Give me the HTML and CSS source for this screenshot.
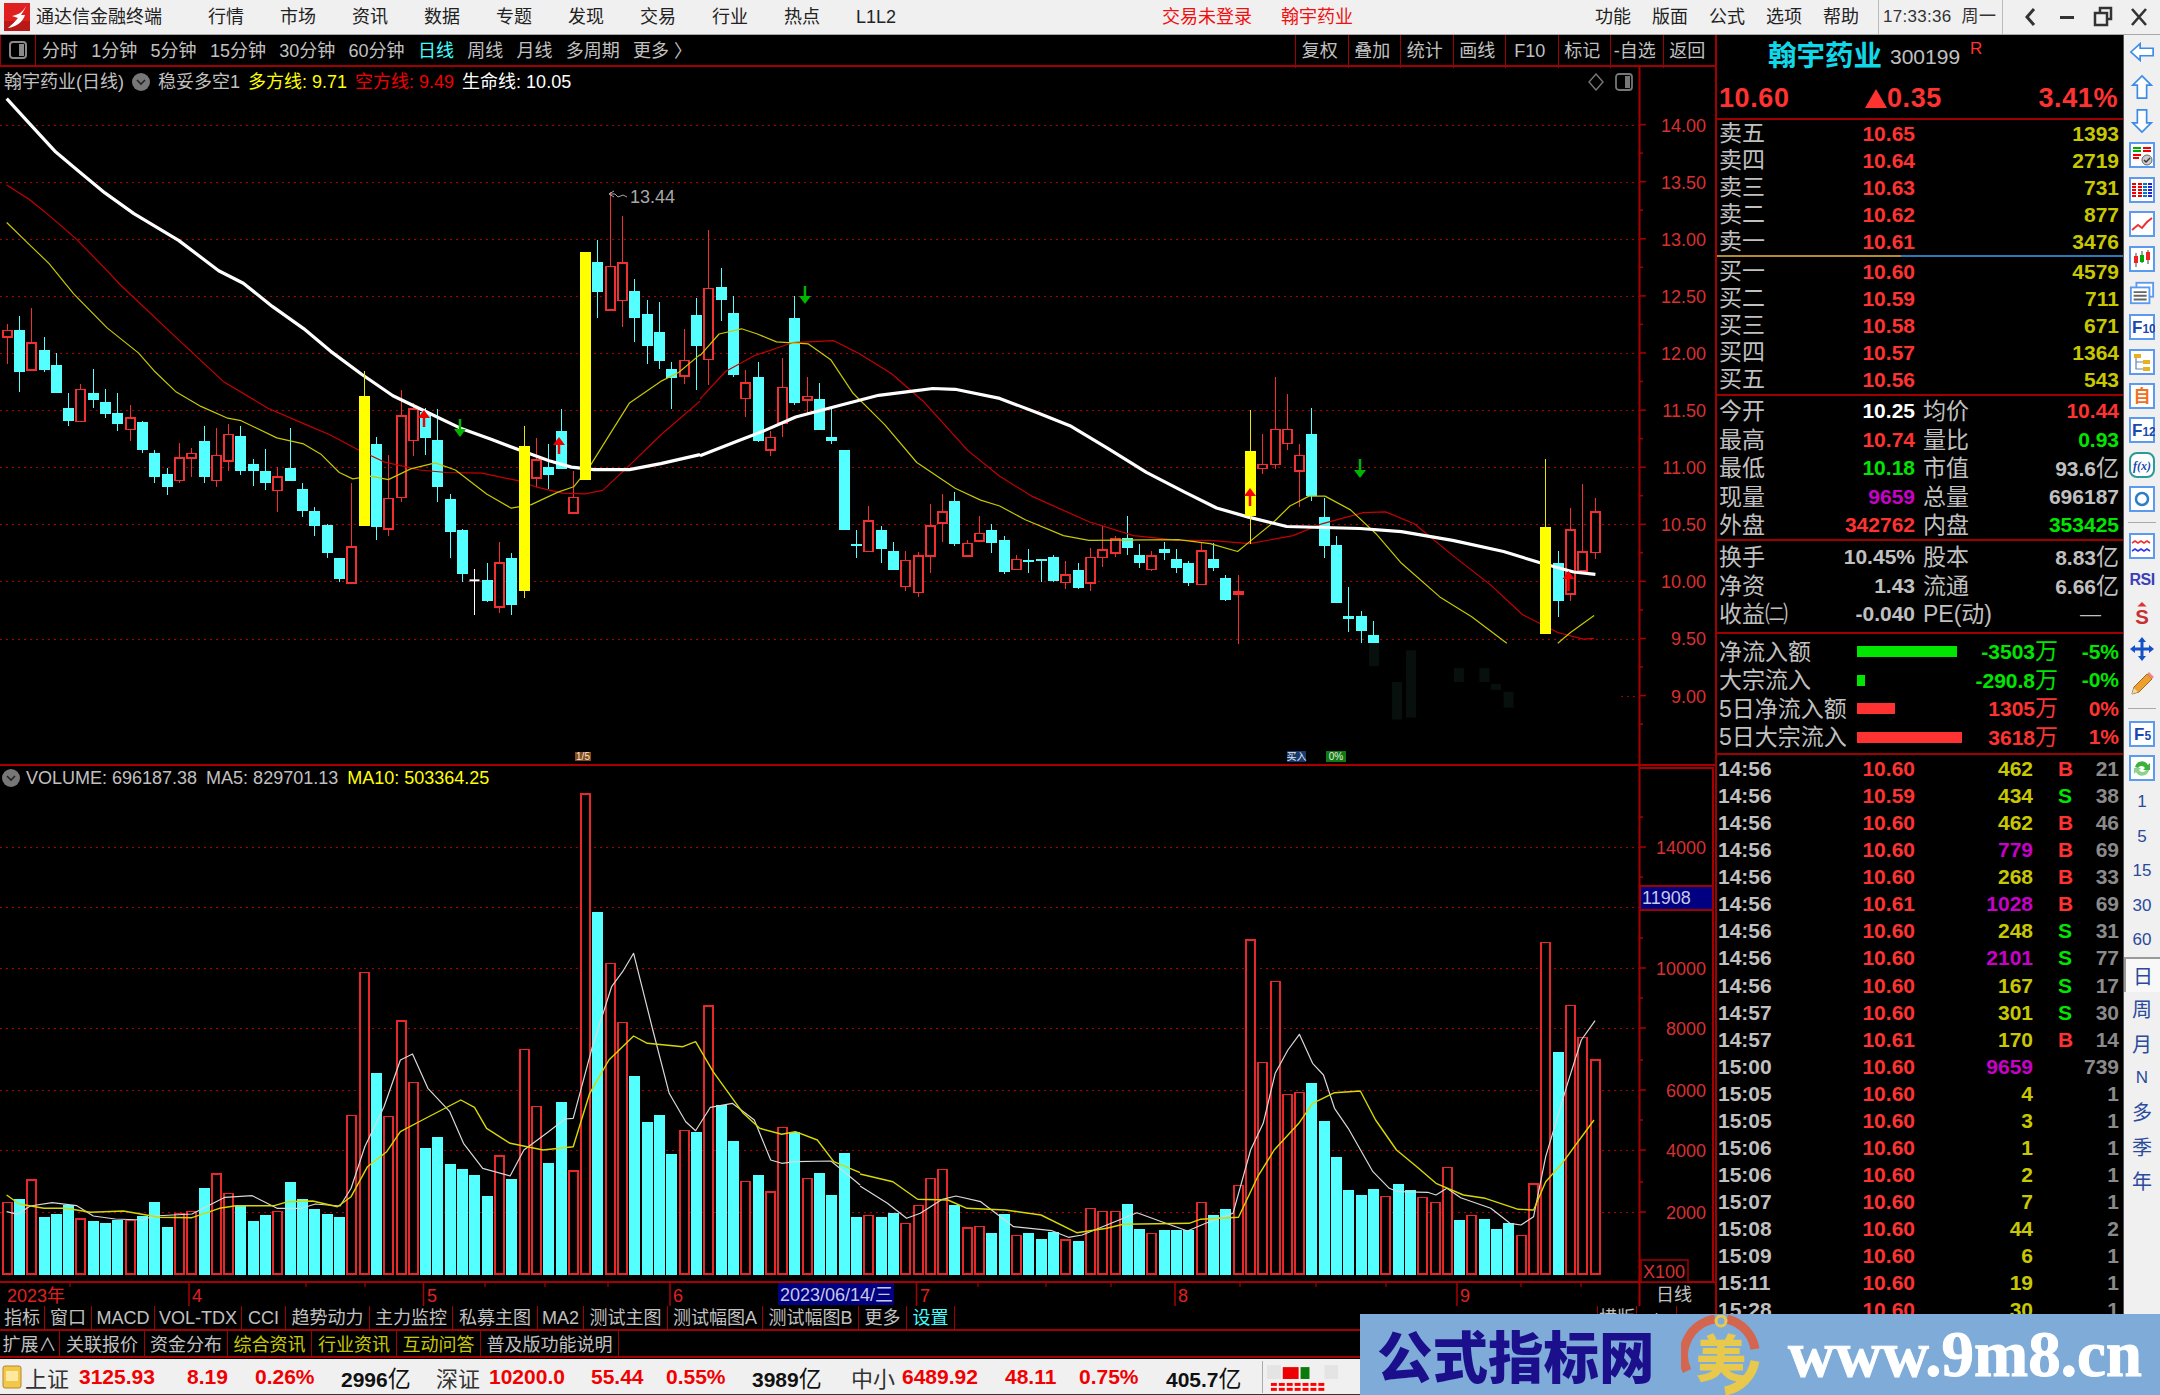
FILE: index.html
```html
<!DOCTYPE html>
<html lang="zh-CN">
<head>
<meta charset="utf-8">
<title>通达信金融终端</title>
<link rel="stylesheet" href="styles.css">
</head>
<body>
<div class="app">
  <header class="titlebar">
    <svg class="logo" viewBox="0 0 26 28"><rect width="26" height="28" fill="#e02020"/><rect x="0" y="18" width="26" height="10" fill="#b81818"/><path d="M22 3C19 9 14 12 8 13l6 2C11 19 7 22 4 25c8-1 15-6 17-13l-4 0c2-3 4-6 5-9Z" fill="#fff"/></svg>
    <span class="app-name">通达信金融终端</span>
    <nav class="menu menu-main"><span>行情</span><span>市场</span><span>资讯</span><span>数据</span><span>专题</span><span>发现</span><span>交易</span><span>行业</span><span>热点</span><span>L1L2</span></nav>
    <span class="alert alert-login">交易未登录</span>
    <span class="alert alert-stock">翰宇药业</span>
    <nav class="menu menu-right"><span>功能</span><span>版面</span><span>公式</span><span>选项</span><span>帮助</span></nav>
    <div class="clock"><span>17:33:36</span><span>周一</span></div>
    <div class="win-btns">
      <svg viewBox="0 0 20 24"><path d="M13 4 6 12l7 8" fill="none" stroke="#333" stroke-width="3"/></svg>
      <svg viewBox="0 0 20 24"><rect x="3" y="11" width="14" height="3" fill="#333"/></svg>
      <svg viewBox="0 0 20 24"><rect x="7" y="3" width="11" height="11" fill="none" stroke="#333" stroke-width="2.5"/><rect x="2" y="8" width="12" height="12" fill="#f0f0f0" stroke="#333" stroke-width="2.5"/></svg>
      <svg viewBox="0 0 20 24"><path d="M3 4l14 16M17 4 3 20" fill="none" stroke="#333" stroke-width="2.6"/></svg>
    </div>
  </header>

  <div class="workspace">
    <main class="left">
      <div class="toolbar">
        <div class="tool-toggle"><svg viewBox="0 0 20 20"><rect x="2" y="2" width="16" height="16" rx="3" fill="none" stroke="#8a8a8a" stroke-width="2"/><rect x="11" y="4" width="5" height="12" fill="#8a8a8a"/></svg></div>
        <div class="periods"><span>分时</span><span>1分钟</span><span>5分钟</span><span>15分钟</span><span>30分钟</span><span>60分钟</span><span class="c">日线</span><span>周线</span><span>月线</span><span>多周期</span><span>更多 〉</span></div>
        <div class="tool-btns"><span>复权</span><span>叠加</span><span>统计</span><span>画线</span><span>F10</span><span>标记</span><span>-自选</span><span>返回</span></div>
      </div>

      <div class="charts">
        <svg id="chart" class="chart" viewBox="0 67 1715 1239" width="1715" height="1239">
          <g id="chart-layer"></g>
          <g class="ax">
            <text x="1706" y="126">14.00</text><text x="1706" y="183">13.50</text><text x="1706" y="240">13.00</text><text x="1706" y="297">12.50</text><text x="1706" y="354">12.00</text><text x="1706" y="411">11.50</text><text x="1706" y="468">11.00</text><text x="1706" y="525">10.50</text><text x="1706" y="582">10.00</text><text x="1706" y="639">9.50</text><text x="1706" y="697">9.00</text>
            <text x="1706" y="848">14000</text><text x="1706" y="969">10000</text><text x="1706" y="1029">8000</text><text x="1706" y="1091">6000</text><text x="1706" y="1151">4000</text><text x="1706" y="1213">2000</text>
          </g>
          <rect class="cursor-box" x="1640" y="886" width="73" height="24"/>
          <text class="cursor-text" x="1642" y="898">11908</text>
          <rect class="x100-box" x="1641" y="1260" width="47" height="22"/>
          <text class="x100" x="1643" y="1272">X100</text>
          <text class="peak" x="630" y="197">13.44</text>
          <rect class="tag tag-o" x="575" y="752" width="16" height="9"/><text class="tag-t" x="583" y="756.5">1/5</text>
          <rect class="tag tag-b" x="1287" y="751" width="19" height="11"/><text class="tag-t" x="1296.5" y="756.5">买入</text>
          <rect class="tag tag-g" x="1326" y="751" width="20" height="11"/><text class="tag-t" x="1336" y="756.5">0%</text>
          <g class="time">
            <text x="7" y="1296">2023年</text><text x="192" y="1296">4</text><text x="427" y="1296">5</text><text x="673" y="1296">6</text><text x="920" y="1296">7</text><text x="1178" y="1296">8</text><text x="1460" y="1296">9</text>
          </g>
          <rect class="cursor-box cursor-date" x="778" y="1283" width="116" height="22"/>
          <text class="date-t" x="780" y="1295">2023/06/14/三</text>
          <text class="day-t" x="1674" y="1295">日线</text>
        </svg>
        <div class="chart-head head-price">
          <span>翰宇药业(日线)</span>
          <svg class="chev" viewBox="0 0 18 18"><circle cx="9" cy="9" r="9" fill="#777"/><path d="M5 7l4 4 4-4" fill="none" stroke="#222" stroke-width="1.6"/></svg>
          <span>稳妥多空1</span>
          <span class="y">多方线: 9.71</span>
          <span class="r0">空方线: 9.49</span>
          <span class="w">生命线: 10.05</span>
        </div>
        <div class="chart-tools">
          <svg viewBox="0 0 18 18"><path d="M9 1 16 9 9 17 2 9Z" fill="none" stroke="#777" stroke-width="1.4"/></svg>
          <svg viewBox="0 0 18 18"><rect x="1" y="1" width="16" height="16" rx="3" fill="none" stroke="#777" stroke-width="1.8"/><rect x="10" y="3" width="5" height="12" fill="#777"/></svg>
        </div>
        <div class="chart-head head-vol">
          <svg class="chev" viewBox="0 0 18 18"><circle cx="9" cy="9" r="9" fill="#777"/><path d="M5 7l4 4 4-4" fill="none" stroke="#222" stroke-width="1.6"/></svg>
          <span>VOLUME: 696187.38</span>
          <span>MA5: 829701.13</span>
          <span class="y">MA10: 503364.25</span>
        </div>
      </div>

      <div class="tabs tabs-one">
        <span class="t45">指标</span><span class="t47">窗口</span><span class="t63">MACD</span><span class="t87">VOL-TDX</span><span class="t44">CCI</span><span class="t84">趋势动力</span><span class="t83">主力监控</span><span class="t85">私募主图</span><span class="t46">MA2</span><span class="t84">测试主图</span><span class="t95">测试幅图A</span><span class="t96">测试幅图B</span><span class="t48">更多</span><span class="t48 c">设置</span>
        <span class="t-end">横版</span><span class="t-plus">+</span>
      </div>
      <div class="tabs tabs-two">
        <span class="t60">扩展∧</span><span class="t85">关联报价</span><span class="t83">资金分布</span><span class="t84 y2">综合资讯</span><span class="t85 y2">行业资讯</span><span class="t84 y2">互动问答</span><span class="t138">普及版功能说明</span>
      </div>
    </main>

    <aside class="panel">
      <div class="quote-head">
        <div class="name-row"><span class="name">翰宇药业</span><span class="code">300199</span><span class="rmark">R</span></div>
        <div class="price-row"><span>10.60</span><span class="pr-chg"><i class="up"></i>0.35</span><span>3.41%</span></div>
      </div>
      <div class="book book-sell">
        <div class="brow"><b>卖五</b><span class="r">10.65</span><span class="v">1393</span></div>
        <div class="brow"><b>卖四</b><span class="r">10.64</span><span class="v">2719</span></div>
        <div class="brow"><b>卖三</b><span class="r">10.63</span><span class="v">731</span></div>
        <div class="brow"><b>卖二</b><span class="r">10.62</span><span class="v">877</span></div>
        <div class="brow"><b>卖一</b><span class="r">10.61</span><span class="v">3476</span></div>
      </div>
      <div class="book-sep"></div>
      <div class="book book-buy">
        <div class="brow"><b>买一</b><span class="r">10.60</span><span class="v">4579</span></div>
        <div class="brow"><b>买二</b><span class="r">10.59</span><span class="v">711</span></div>
        <div class="brow"><b>买三</b><span class="r">10.58</span><span class="v">671</span></div>
        <div class="brow"><b>买四</b><span class="r">10.57</span><span class="v">1364</span></div>
        <div class="brow"><b>买五</b><span class="r">10.56</span><span class="v">543</span></div>
      </div>
      <div class="stats stats-a">
        <div class="srow"><b>今开</b><span class="w">10.25</span><b class="l2">均价</b><span class="r">10.44</span></div>
        <div class="srow"><b>最高</b><span class="r">10.74</span><b class="l2">量比</b><span class="g">0.93</span></div>
        <div class="srow"><b>最低</b><span class="g">10.18</span><b class="l2">市值</b><span class="gy">93.6<em>亿</em></span></div>
        <div class="srow"><b>现量</b><span class="m">9659</span><b class="l2">总量</b><span class="gy">696187</span></div>
        <div class="srow"><b>外盘</b><span class="r">342762</span><b class="l2">内盘</b><span class="g">353425</span></div>
      </div>
      <div class="stats stats-b">
        <div class="srow"><b>换手</b><span class="gy">10.45%</span><b class="l2">股本</b><span class="gy">8.83<em>亿</em></span></div>
        <div class="srow"><b>净资</b><span class="gy">1.43</span><b class="l2">流通</b><span class="gy">6.66<em>亿</em></span></div>
        <div class="srow"><b>收益㈡</b><span class="gy">-0.040</span><b class="l2 pe">PE(动)</b><span class="gy dash">—</span></div>
      </div>
      <div class="flows">
        <div class="frow"><b>净流入额</b><i class="bar bar-g w100"></i><span class="g">-3503<em>万</em></span><span class="g">-5%</span></div>
        <div class="frow"><b>大宗流入</b><i class="bar bar-g w8"></i><span class="g">-290.8<em>万</em></span><span class="g">-0%</span></div>
        <div class="frow"><b>5日净流入额</b><i class="bar bar-r w38"></i><span class="r">1305<em>万</em></span><span class="r">0%</span></div>
        <div class="frow"><b>5日大宗流入</b><i class="bar bar-r w105"></i><span class="r">3618<em>万</em></span><span class="r">1%</span></div>
      </div>
      <div class="ticks">
        <div class="trow"><b>14:56</b><span class="r">10.60</span><span class="v">462</span><span class="r">B</span><span class="n">21</span></div>
        <div class="trow"><b>14:56</b><span class="r">10.59</span><span class="v">434</span><span class="g">S</span><span class="n">38</span></div>
        <div class="trow"><b>14:56</b><span class="r">10.60</span><span class="v">462</span><span class="r">B</span><span class="n">46</span></div>
        <div class="trow"><b>14:56</b><span class="r">10.60</span><span class="m">779</span><span class="r">B</span><span class="n">69</span></div>
        <div class="trow"><b>14:56</b><span class="r">10.60</span><span class="v">268</span><span class="r">B</span><span class="n">33</span></div>
        <div class="trow"><b>14:56</b><span class="r">10.61</span><span class="m">1028</span><span class="r">B</span><span class="n">69</span></div>
        <div class="trow"><b>14:56</b><span class="r">10.60</span><span class="v">248</span><span class="g">S</span><span class="n">31</span></div>
        <div class="trow"><b>14:56</b><span class="r">10.60</span><span class="m">2101</span><span class="g">S</span><span class="n">77</span></div>
        <div class="trow"><b>14:56</b><span class="r">10.60</span><span class="v">167</span><span class="g">S</span><span class="n">17</span></div>
        <div class="trow"><b>14:57</b><span class="r">10.60</span><span class="v">301</span><span class="g">S</span><span class="n">30</span></div>
        <div class="trow"><b>14:57</b><span class="r">10.61</span><span class="v">170</span><span class="r">B</span><span class="n">14</span></div>
        <div class="trow"><b>15:00</b><span class="r">10.60</span><span class="m">9659</span><span></span><span class="n">739</span></div>
        <div class="trow"><b>15:05</b><span class="r">10.60</span><span class="v">4</span><span></span><span class="n">1</span></div>
        <div class="trow"><b>15:05</b><span class="r">10.60</span><span class="v">3</span><span></span><span class="n">1</span></div>
        <div class="trow"><b>15:06</b><span class="r">10.60</span><span class="v">1</span><span></span><span class="n">1</span></div>
        <div class="trow"><b>15:06</b><span class="r">10.60</span><span class="v">2</span><span></span><span class="n">1</span></div>
        <div class="trow"><b>15:07</b><span class="r">10.60</span><span class="v">7</span><span></span><span class="n">1</span></div>
        <div class="trow"><b>15:08</b><span class="r">10.60</span><span class="v">44</span><span></span><span class="n">2</span></div>
        <div class="trow"><b>15:09</b><span class="r">10.60</span><span class="v">6</span><span></span><span class="n">1</span></div>
        <div class="trow"><b>15:11</b><span class="r">10.60</span><span class="v">19</span><span></span><span class="n">1</span></div>
        <div class="trow"><b>15:28</b><span class="r">10.60</span><span class="v">30</span><span></span><span class="n">1</span></div>
      </div>
    </aside>

    <aside class="sidebar">
      <div class="sb"><svg viewBox="0 0 28 24"><path d="M2 12 12 3v5h14v8H12v5Z" class="ic-a"/></svg></div>
      <div class="sb"><svg viewBox="0 0 24 28"><path d="M12 2l10 10h-5v14H7V12H2Z" class="ic-a"/></svg></div>
      <div class="sb"><svg viewBox="0 0 24 28"><path d="M12 26 2 16h5V2h10v14h5Z" class="ic-a"/></svg></div>
      <div class="sb"><svg viewBox="0 0 26 26"><rect x="1" y="1" width="24" height="24" class="ic-b"/><path d="M4 6h8M4 9h8" stroke="#0a0" stroke-width="2"/><path d="M14 6h8M14 9h8" stroke="#e00" stroke-width="2"/><path d="M4 13h8M4 16h6" stroke="#e00" stroke-width="2"/><circle cx="18" cy="18" r="5" fill="#ccc" stroke="#666"/><path d="M15 18l2 2 4-4" fill="none" stroke="#333" stroke-width="1.4"/></svg></div>
      <div class="sb"><svg viewBox="0 0 26 26"><rect x="1" y="1" width="24" height="24" class="ic-b"/><path d="M5 6v15M5 6" stroke="#e00" stroke-width="4" stroke-dasharray="2 1"/><path d="M11 6v15" stroke="#e00" stroke-width="4" stroke-dasharray="2 1"/><path d="M16 6v15" stroke="#07c" stroke-width="4" stroke-dasharray="2 1"/><path d="M21 6v15" stroke="#22d" stroke-width="4" stroke-dasharray="2 1"/></svg></div>
      <div class="sb"><svg viewBox="0 0 26 26"><rect x="1" y="1" width="24" height="24" class="ic-b"/><path d="M3 19l6-5 4 3 5-6 5-4" fill="none" stroke="#e33" stroke-width="2"/></svg></div>
      <div class="sb"><svg viewBox="0 0 26 26"><rect x="1" y="1" width="24" height="24" class="ic-b"/><path d="M7 7v14M13 5v12M19 4v14" stroke="#444"/><rect x="5" y="10" width="4" height="7" fill="#e22"/><rect x="11" y="9" width="4" height="7" fill="#0a0"/><rect x="17" y="6" width="4" height="8" fill="#e22"/></svg></div>
      <div class="sb"><svg viewBox="0 0 28 26"><rect x="8" y="2" width="18" height="15" class="ic-b"/><rect x="2" y="7" width="20" height="17" class="ic-b"/><path d="M5 12h14M5 16h14M5 20h14" stroke="#666" stroke-width="2"/></svg></div>
      <div class="sb"><svg viewBox="0 0 26 26"><rect x="1" y="1" width="24" height="24" class="ic-b"/><text x="3" y="19" class="ic-t">F<tspan class="ic-sm">10</tspan></text></svg></div>
      <div class="sb"><svg viewBox="0 0 26 26"><rect x="1" y="1" width="24" height="24" class="ic-b"/><rect x="5" y="5" width="7" height="4" fill="#e8b020"/><rect x="14" y="11" width="7" height="4" fill="#e8b020"/><rect x="14" y="18" width="7" height="4" fill="#e8b020"/><path d="M7 9v11h7M7 13h7" fill="none" stroke="#68a" stroke-width="1.2"/></svg></div>
      <div class="sb"><svg viewBox="0 0 26 26"><rect x="1" y="1" width="24" height="24" class="ic-b"/><text x="13" y="19" class="ic-z">自</text></svg></div>
      <div class="sb"><svg viewBox="0 0 26 26"><rect x="1" y="1" width="24" height="24" class="ic-b"/><text x="3" y="19" class="ic-t">F<tspan class="ic-sm">12</tspan></text></svg></div>
      <div class="sb"><svg viewBox="0 0 26 26"><rect x="1" y="1" width="24" height="24" rx="7" class="ic-c"/><text x="4" y="18" class="ic-f">f(x)</text></svg></div>
      <div class="sb"><svg viewBox="0 0 26 26"><rect x="1" y="1" width="24" height="24" class="ic-b"/><circle cx="13" cy="13" r="6" fill="none" stroke="#2a7fc8" stroke-width="2.5"/></svg></div>
      <div class="sb-sep"></div>
      <div class="sb"><svg viewBox="0 0 26 26"><rect x="1" y="1" width="24" height="24" class="ic-b"/><path d="M3 10l3-2 3 2 3-2 3 2 3-2 3 2" fill="none" stroke="#e33" stroke-width="1.6"/><path d="M3 18l3-2 3 2 3-2 3 2 3-2 3 2" fill="none" stroke="#33e" stroke-width="1.6"/></svg></div>
      <div class="sb"><span class="rsi">RSI</span></div>
      <div class="sb"><svg viewBox="0 0 26 28"><path d="M13 1l5 5H8Z" fill="#d33"/><text x="13" y="25" class="ic-s">S</text></svg></div>
      <div class="sb"><svg viewBox="0 0 26 26"><path d="M13 1l4 5h-2.500v5.500H20V9l5 4-5 4v-2.500h-5.500V20H17l-4 5-4-5h2.500v-5.500H6V17l-5-4 5-4v2.500h5.500V6H9Z" fill="#1450c8"/></svg></div>
      <div class="sb"><svg viewBox="0 0 26 26"><path d="M5 17 18 4l5 5L10 22l-7 2Z" fill="#eda030" stroke="#a06a20"/><path d="M18 4l5 5 2-2-5-5Z" fill="#e88"/><path d="M3 24l2-6 4 4Z" fill="#ecd7b0"/></svg></div>
      <div class="sb-sep sb-sep-two"></div>
      <div class="sb"><svg viewBox="0 0 26 26"><rect x="1" y="1" width="24" height="24" class="ic-b"/><text x="5" y="19" class="ic-t">F<tspan class="ic-sm">5</tspan></text></svg></div>
      <div class="sb"><svg viewBox="0 0 26 26"><rect x="1" y="1" width="24" height="24" class="ic-b"/><path d="M6 12a7 7 0 0 1 13-2l2-2v7h-7l2-2a4 4 0 0 0-7 0Z" fill="#3cb23c"/><path d="M20 15a7 7 0 0 1-13 2l-2 2v-6h7l-2 2a4 4 0 0 0 7 0Z" fill="#8ed08e"/></svg></div>
      <div class="sb lab">1</div><div class="sb lab">5</div><div class="sb lab">15</div><div class="sb lab">30</div><div class="sb lab">60</div>
      <div class="sb lab big active">日</div><div class="sb lab big">周</div><div class="sb lab big">月</div><div class="sb lab">N</div><div class="sb lab big">多</div><div class="sb lab big">季</div><div class="sb lab big">年</div>
    </aside>
  </div>

  <footer class="status">
    <svg class="status-ic" viewBox="0 0 20 24"><rect x="1" y="1" width="18" height="22" rx="2" fill="#f2c84a" stroke="#b8862a"/><rect x="4" y="6" width="12" height="10" fill="#ffe9a0"/></svg>
    <span class="big-l">上证</span><span class="num">3125.93</span><span class="num">8.19</span><span class="num">0.26%</span><span class="amt">2996<em>亿</em></span>
    <span class="big-l">深证</span><span class="num">10200.0</span><span class="num">55.44</span><span class="num">0.55%</span><span class="amt">3989<em>亿</em></span>
    <span class="big-l">中小</span><span class="num">6489.92</span><span class="num">48.11</span><span class="num">0.75%</span><span class="amt">405.7<em>亿</em></span>
    <svg class="status-meter" viewBox="0 0 90 32"><g fill="#e4e4e4"><rect x="4" y="4" width="14" height="14"/><rect x="62" y="4" width="14" height="14"/></g><rect x="20" y="6" width="16" height="12" fill="#e00"/><rect x="38" y="6" width="9" height="12" fill="#0a7a0a"/><g fill="#f00"><rect x="8" y="22" width="6" height="3"/><rect x="16" y="22" width="6" height="3"/><rect x="24" y="22" width="6" height="3"/><rect x="32" y="22" width="6" height="3"/><rect x="40" y="22" width="6" height="3"/><rect x="48" y="22" width="6" height="3"/><rect x="56" y="22" width="6" height="3"/><rect x="8" y="27" width="6" height="3"/><rect x="16" y="27" width="6" height="3"/><rect x="24" y="27" width="6" height="3"/><rect x="32" y="27" width="6" height="3"/><rect x="40" y="27" width="6" height="3"/><rect x="48" y="27" width="6" height="3"/><rect x="56" y="27" width="6" height="3"/></g></svg>
  </footer>
</div>

<aside class="watermark">
  <span class="wm-title">公式指标网</span>
  <svg class="wm-logo" viewBox="0 0 80 80">
    <path d="M6 56A37 37 0 0 1 34 4" fill="none" stroke="#d4654e" stroke-width="9"/>
    <path d="M46 4A37 37 0 0 1 74 34" fill="none" stroke="#d4654e" stroke-width="9"/>
    <path d="M74 46A37 37 0 0 1 44 76" fill="none" stroke="#e9c94c" stroke-width="9"/>
    <circle cx="40" cy="6" r="5" fill="none" stroke="#e9c94c" stroke-width="3"/>
    <text x="40" y="62" class="wm-mark">美</text>
  </svg>
  <span class="wm-url">www.9m8.cn</span>
</aside>
<script src="chart.js"></script>
</body>
</html>
```

FILE: styles.css
```css
* { box-sizing: border-box; }
html, body { margin: 0; padding: 0; background: #000; }
body {
  width: 2160px; height: 1395px; overflow: hidden; position: relative;
  font-family: "Liberation Sans", "Noto Sans CJK SC", sans-serif;
  color: #c0c0c0;
}
.app { display: flex; flex-direction: column; width: 2160px; height: 1395px; }

/* title bar */
.titlebar {
  height: 35px; flex: none; display: flex; align-items: center;
  background: #f0f0f0; border-bottom: 1px solid #a8a8a8; color: #222;
  font-size: 18px; line-height: 34px; position: relative;
}
.logo { width: 26px; height: 28px; margin-left: 4px; flex: none; }
.app-name { margin-left: 6px; width: 125px; white-space: nowrap; }
.menu { display: flex; gap: 36px; white-space: nowrap; }
.menu-main { margin-left: 47px; width: 690px; flex: none; }
.alert { color: #f01010; white-space: nowrap; }
.alert-login { margin-left: 264px; width: 119px; }
.alert-stock { width: 72px; }
.menu-right { margin-left: auto; gap: 21px; }
.clock { display: flex; gap: 10px; height: 34px; width: 125px; margin-left: 19px; padding-left: 4px; border-left: 1px solid #bbb; border-right: 1px solid #bbb; color: #333; font-size: 17px; letter-spacing: .3px; white-space: nowrap; }
.win-btns { display: flex; gap: 16px; align-items: center; width: 157px; padding-left: 18px; }
.win-btns svg { width: 20px; height: 24px; flex: none; }

/* layout */
.workspace { flex: none; height: 1324px; display: flex; overflow: hidden; }
.left { width: 1715px; flex: none; display: flex; flex-direction: column; background: #000; }

/* period toolbar */
.toolbar { height: 32px; flex: none; display: flex; align-items: stretch; border-bottom: 2px solid #a00000; font-size: 18px; line-height: 33px; white-space: nowrap; }
.tool-toggle { width: 36px; flex: none; border-left: 1px solid #a00000; border-right: 1px solid #a00000; display: flex; align-items: center; justify-content: center; }
.tool-toggle svg { width: 20px; height: 20px; }
.periods { display: flex; gap: 13.300px; margin-left: 6px; }
.tool-btns { display: grid; grid-template-columns: repeat(8, 52.500px); margin-left: auto; text-align: center; }
.tool-btns span { border-left: 1px solid #a00000; padding-right: 4px; }
.c { color: #40ffff; }

/* charts */
.charts { position: relative; height: 1239px; flex: none; }
.chart { display: block; }
.chart text { font-family: "Liberation Sans", "Noto Sans CJK SC", sans-serif; dominant-baseline: central; }
.ax text { font-size: 18px; fill: #d83030; text-anchor: end; }
.cursor-box { fill: #000080; stroke: #a00000; stroke-width: 2; }
.cursor-date { stroke: none; }
.cursor-text { font-size: 18px; fill: #c8c8e8; }
.x100-box { fill: #000; stroke: #a00000; stroke-width: 1.500; }
.x100 { font-size: 18px; fill: #d83030; }
.peak { font-size: 18px; fill: #a8a8a8; }
.tag-o { fill: #8a4a10; }
.tag-b { fill: #173a70; }
.tag-g { fill: #0f7a0f; }
.tag-t { font-size: 10px; fill: #e8e8e8; text-anchor: middle; }
.time text { font-size: 18px; fill: #e02020; }
.date-t { font-size: 18px; fill: #c8c8e8; }
.day-t { font-size: 18px; fill: #c0c0c0; text-anchor: middle; }
.chart-head { position: absolute; left: 0; display: flex; align-items: center; gap: 8px; font-size: 18px; line-height: 24px; white-space: nowrap; }
.head-price { top: 3px; padding-left: 4px; }
.head-vol { top: 699px; padding-left: 2px; gap: 9px; }
.chev { width: 18px; height: 18px; flex: none; }
.head-vol .chev { margin-right: -3px; }
.y { color: #ffff00; }
.r0 { color: #f00000; }
.w { color: #ffffff; }
.chart-tools { position: absolute; top: 6px; left: 1587px; display: flex; gap: 10px; }
.chart-tools svg { width: 18px; height: 18px; }

/* tabs */
.tabs { display: flex; flex: none; font-size: 18px; white-space: nowrap; border-bottom: 2px solid #a00000; position: relative; }
.tabs-one { height: 25px; line-height: 22px; }
.tabs-two { height: 27px; line-height: 22px; }
.tabs span { text-align: center; border-right: 1px solid #a00000; flex: none; }
.tabs-one span { padding-top: 1px; }
.tabs-two span { padding-top: 3px; }
.tabs .t-end { position: absolute; left: 1597px; width: 40px; height: 23px; border-left: 1px solid #a00000; }
.tabs .t-plus { position: absolute; left: 1637px; width: 40px; height: 23px; }
.t44 { width: 44px; } .t45 { width: 45px; } .t46 { width: 46px; } .t47 { width: 47px; } .t48 { width: 48px; }
.t60 { width: 60px; } .t63 { width: 63px; } .t83 { width: 83px; } .t84 { width: 84px; } .t85 { width: 85px; }
.t87 { width: 87px; } .t95 { width: 95px; } .t96 { width: 96px; } .t138 { width: 138px; }
.y2 { color: #c8c800; }

/* right panel */
.panel { width: 408px; flex: none; background: #000; border-left: 2px solid #a00000; display: flex; flex-direction: column; overflow: hidden; }
.panel b { font-weight: 400; font-size: 23px; color: #c0c0c0; white-space: nowrap; }
.panel span { font-size: 21px; font-weight: 700; white-space: nowrap; }
.panel em, .status em { font-style: normal; font-weight: 400; font-size: 23px; }
.r { color: #ff3232; }
.g { color: #00e600; }
.v { color: #c8c800; }
.m { color: #c800c8; }
.gy { color: #c0c0c0; }
.panel .w { color: #fff; }
.quote-head { height: 85px; flex: none; border-bottom: 2px solid #a00000; }
.name-row { height: 40px; display: flex; align-items: center; padding-left: 51px; }
.panel .name { font-size: 28.500px; color: #10d8e8; width: 122px; line-height: 40px; padding-top: 1px; }
.panel .code { font-weight: 400; color: #c0c0c0; width: 80px; padding-top: 4px; }
.panel .rmark { font-size: 17px; font-weight: 400; color: #ff3232; margin-top: -12px; }
.price-row { display: grid; grid-template-columns: 146px 172px 81px; padding: 3px 0 0 2px; color: #ff3232; height: 43px; align-items: center; }
.panel .price-row span { font-size: 27px; color: #ff3232; letter-spacing: .6px; }
.price-row span:last-child { text-align: right; }
.pr-chg { display: flex; align-items: center; }
.up { width: 0; height: 0; border-left: 11px solid transparent; border-right: 11px solid transparent; border-bottom: 19px solid #ff3232; margin-right: 0; }
.brow { height: 27px; line-height: 27px; display: grid; grid-template-columns: 145px 53px 204px; }
.brow b, .srow > b:first-child, .frow b { padding-left: 2px; }
.brow span, .srow span, .frow span, .trow span { text-align: right; }
.book-sep { height: 2px; flex: none; background: linear-gradient(90deg, #b88a30 0 184px, #2f78b8 184px); }
.book-buy { height: 139px; padding-top: 1px; border-bottom: 2px solid #a00000; flex: none; }
.stats { flex: none; border-bottom: 2px solid #a00000; }
.stats-a { height: 145px; padding-top: 1px; }
.stats-b { height: 93px; padding-top: 2px; }
.srow { height: 28.500px; line-height: 28.500px; display: grid; grid-template-columns: 100px 98px 60px 144px; }
.l2 { padding-left: 8px; }
.panel .dash { padding-right: 18px; font-weight: 400; }
.flows { height: 121px; flex: none; padding-top: 3px; border-bottom: 2px solid #a00000; }
.frow { height: 28.500px; line-height: 28.500px; display: grid; grid-template-columns: 140px 118px 83px 61px; align-items: center; }
.bar { display: block; height: 11px; }
.bar-g { background: #00e600; }
.bar-r { background: #ff3232; }
.w100 { width: 100px; } .w8 { width: 8px; } .w38 { width: 38px; } .w105 { width: 105px; }
.trow { height: 27.070px; line-height: 27.070px; display: grid; grid-template-columns: 145px 53px 118px 40px 46px; }
.panel .trow b { font-size: 21px; font-weight: 700; padding-left: 1px; }
.panel .trow span:nth-child(4) { text-align: left; padding-left: 25px; }
.panel .n { color: #8a8a8a; }

/* sidebar */
.sidebar { width: 37px; flex: none; background: #f0f0f0; border-left: 1px solid #555; }
.sb { height: 34.400px; display: flex; align-items: center; justify-content: center; }
.sb svg { width: 26px; height: 26px; }
.sb-sep { height: 12px; display: flex; align-items: center; position: relative; }
.sb-sep::before { content: ""; display: block; width: 28px; height: 1px; margin-left: 4px; background: #aaa; }
.sb-sep-two { height: 16px; }
.ic-a { fill: #fff; stroke: #3b8be8; stroke-width: 1.800; }
.ic-b { fill: #fff; stroke: #5a9af0; stroke-width: 2; }
.ic-c { fill: #fff; stroke: #2a9a9a; stroke-width: 2; }
.ic-t { font: 700 17px "Liberation Sans", sans-serif; fill: #1a4ab0; }
.ic-sm { font-size: 12px; }
.ic-z { font: 700 17px "Noto Sans CJK SC", sans-serif; fill: #f07020; text-anchor: middle; }
.ic-f { font: italic 700 12px "Liberation Serif", serif; fill: #1a4ab0; }
.ic-s { font: 700 22px "Liberation Sans", sans-serif; fill: #c83030; text-anchor: middle; }
.rsi { font-size: 16px; font-weight: 700; color: #3a40b8; letter-spacing: -.5px; }
.lab { font-size: 17px; color: #2a4a9a; }
.lab.big { font-size: 20px; }
.active { background: #f8f8f8; border-top: 2px solid #999; border-left: 2px solid #999; }

/* status bar */
.status {
  height: 36px; flex: none; background: #f0f0f0; border-bottom: 1px solid #333;
  display: grid; grid-template-columns: 25px 54px 108px 68px 86px 95px 53px 102px 75px 86px 99px 51px 103px 74px 87px 96px 100px;
  align-items: center; white-space: nowrap;
}
.status-ic { width: 20px; height: 24px; margin-left: 2px; }
.big-l { font-size: 22px; color: #333; }
.num { font-size: 21px; font-weight: 700; color: #f00000; }
.amt { font-size: 21px; font-weight: 700; color: #111; }
.status-meter { width: 90px; height: 32px; border-left: 1px solid #aaa; margin-left: 0; }

/* watermark */
.watermark {
  position: absolute; right: 0; bottom: 0; width: 800px; height: 81px;
  background: #7fabd9; display: flex; align-items: center; padding-left: 17px;
}
.wm-title { font-family: "Noto Sans CJK SC", sans-serif; font-weight: 900; font-size: 55.500px; line-height: 81px; color: #1b0f8c; white-space: nowrap; width: 277px; flex: none; }
.wm-logo { width: 80px; height: 80px; flex: none; margin-left: 27px; }
.wm-mark { font: 900 50px "Noto Sans CJK SC", sans-serif; fill: #e9c94c; text-anchor: middle; }
.wm-url { font-family: "Liberation Serif", serif; font-weight: 700; font-size: 65px; line-height: 81px; color: #fff; margin-left: 27px; white-space: nowrap; -webkit-text-stroke: 1px #fff; }
```

FILE: chart.js
```javascript
(function () {
  var NS = 'http://www.w3.org/2000/svg';
  var layer = document.getElementById('chart-layer');
  function el(name, attrs) {
    var n = document.createElementNS(NS, name);
    for (var k in attrs) n.setAttribute(k, attrs[k]);
    layer.appendChild(n);
    return n;
  }
  function barX(i) { return 6.6 + 12.31 * i; }

  // coordinate helpers: data below were read from enlarged crops of the chart
  var A = function (v) { return 60 + v / 2.8; };
  var B = function (v) { return 160 + v / 2.529; };

  var RED = '#f03030', CYAN = '#54ffff', YEL = '#ffff00', DARK = '#a80000';
  var DOT = { stroke: '#a80000', 'stroke-width': 1, 'stroke-dasharray': '2 4' };

  // price grid
  var y;
  function dots(x1, x2, yy) {
    el('line', { x1: x1, x2: x2, y1: yy, y2: yy, stroke: DOT.stroke, 'stroke-width': DOT['stroke-width'], 'stroke-dasharray': DOT['stroke-dasharray'] });
  }
  for (var g = 0; g < 10; g++) {
    y = Math.round(124.6 + 57.1 * g) + 0.5;
    dots(0, 1639, y);
  }
  dots(1621, 1639, 696.5);
  for (g = 0; g < 11; g++) {
    y = 124.6 + 57.1 * g;
    el('line', { x1: 1639, x2: 1646, y1: y, y2: y, stroke: DARK, 'stroke-width': 1.5 });
    el('line', { x1: 1639, x2: 1643, y1: y + 28.5, y2: y + 28.5, stroke: DARK, 'stroke-width': 1.5 });
  }
  // volume grid
  [847, 907, 968, 1028, 1090, 1150, 1212].forEach(function (v) {
    dots(0, 1639, v + 0.5);
    el('line', { x1: 1639, x2: 1646, y1: v, y2: v, stroke: DARK, 'stroke-width': 1.5 });
    el('line', { x1: 1639, x2: 1643, y1: v - 30, y2: v - 30, stroke: DARK, 'stroke-width': 1.5 });
  });

  // faint remnants beneath the price area
  [[1057, 1222, 1280], [1093, 1320, 1415], [1115, 1240, 1410], [1190, 1285, 1320], [1230, 1285, 1320], [1248, 1325, 1340], [1268, 1345, 1385]].forEach(function (f) {
    el('rect', { x: 700 + f[0] / 1.568 - 5, y: B(f[1]), width: 10, height: (f[2] - f[1]) / 2.529, fill: '#08100d' });
  });

  var c6 = [
    ['r',740,758,775,850],['c',718,757,873,930],['r',695,792,868,868],['c',775,812,868,873],['c',820,853,932,932],
    ['c',933,975,1012,1025],['r',908,922,1012,1012],['c',865,933,953,975],['c',920,958,990,1003],['c',933,988,1020,1038],
    ['r',967,1002,1035,1067],['c',1012,1013,1092,1100],['c',1092,1101,1167,1185],['c',1142,1160,1196,1218],['r',1072,1115,1178,1185],
    ['r',1085,1102,1115,1168],['c',1025,1068,1167,1185],['r',1030,1107,1178,1196],['r',1020,1048,1123,1150],['c',1025,1052,1150,1163],
    ['c',1118,1132,1150,1193],['c',1088,1152,1183,1205],['r',1140,1167,1205,1265],['c',1030,1143,1180,1180],['c',1185,1202,1264,1280],
    ['c',1252,1262,1305,1332],['c',1298,1303,1381,1393],['c',1395,1395,1453,1462],['r',1185,1363,1465,1465],['y',870,942,1305,1305],
    ['c',1055,1076,1307,1343],['r',1105,1228,1313,1332],['r',925,997,1225,1238],['r',960,977,1065,1110],['c',975,985,1058,1105],
    ['c',978,1063,1196,1238],['c',1215,1228,1322,1395],['c',1312,1315,1440,1462],['w',1425,1457,1459,1555],['c',1408,1455,1516,1518],
    ['r',1350,1408,1532,1548],['c',1380,1395,1527,1553],['y',1025,1080,1487,1505],['r',1058,1120,1170,1196],['c',1075,1140,1163,1200],
    ['c',978,1038,1145,1145],['r',1152,1225,1268,1272],['y',538,538,1176,1176],['c',505,565,650,722],['r',370,578,700,700],
    ['r',437,568,674,748],['c',613,648,722,790],['c',672,710,802,852],['c',677,762,843,865],['c',845,866,890,978],
    ['r',752,842,885,907],['c',665,715,802,925]
  ];
  var c7 = [
    ['r',177,325,505,570],['c',272,320,353,408],['c',343,388,543,548],['r',530,564,603,650],['c',510,548,710,712],
    ['r',685,702,733,748],['r',500,575,665,700],['c',343,400,615,620],['r',548,598,607,640],['c',563,605,684,684],
    ['c',630,700,711,718],['c',734,734,935,935],['c',935,970,975,1006],['r',875,913,990,990],['c',925,936,984,1018],
    ['c',965,988,1036,1036],['r',990,1013,1078,1090],['r',992,1001,1094,1105],['r',870,925,1002,1044],['r',845,890,918,965],
    ['c',840,863,972,975],['r',960,970,1002,1002],['r',900,944,964,965],['c',920,936,968,995],['c',950,962,1041,1048],
    ['r',1000,1010,1036,1038],['c',985,1012,1017,1045],['c',1008,1008,1011,1068],['c',998,1004,1064,1066],['r',1015,1050,1068,1085],
    ['c',1020,1038,1082,1085],['r',980,1005,1070,1090],['r',925,986,1005,1030],['r',950,958,994,1005],['c',900,955,980,998],
    ['c',972,1000,1018,1032],['r',990,1002,1036,1040],['c',965,984,995,1012],['c',985,1008,1033,1045],['c',1015,1019,1071,1078],
    ['r',965,989,1074,1075],['c',968,1008,1033,1040],['c',1050,1057,1113,1115],['r',1050,1092,1098,1223],['y',632,735,900,970],
    ['r',692,770,780,795],['r',550,682,770,782],['r',593,682,717,733],['r',718,747,786,878],['c',628,692,850,862],
    ['c',855,902,975,1006],['c',950,974,1120,1120],['c',1080,1152,1160,1193],['c',1140,1152,1192,1222],['c',1167,1202,1222,1222]
  ];
  var c7b = { 125: ['y',757,928,1200,1200], 126: ['c',988,1019,1116,1155], 127: ['r',880,936,1097,1115], 128: ['r',820,992,1040,1040], 129: ['r',855,890,993,1010] };

  var candles = [];
  c6.forEach(function (c, i) { candles.push({ i: i, t: c[0], a: A(c[1]), b: A(c[2]), c: A(c[3]), d: A(c[4]) }); });
  c7.forEach(function (c, i) { candles.push({ i: 57 + i, t: c[0], a: B(c[1]), b: B(c[2]), c: B(c[3]), d: B(c[4]) }); });
  Object.keys(c7b).forEach(function (k) { var c = c7b[k]; candles.push({ i: +k, t: c[0], a: B(c[1]), b: B(c[2]), c: B(c[3]), d: B(c[4]) }); });

  function drawCandle(k) {
    var x = Math.round(barX(k.i)) + 0.5;
    var col = k.t === 'r' ? RED : k.t === 'c' ? CYAN : k.t === 'y' ? YEL : '#ffffff';
    el('line', { x1: x, x2: x, y1: k.a, y2: k.d, stroke: k.t === 'y' ? '#e6e600' : col, 'stroke-width': 1.5, 'shape-rendering': 'crispEdges' });
    if (k.t === 'r') {
      el('rect', { x: x - 4.5, y: k.b, width: 9, height: Math.max(k.c - k.b, 2), fill: '#000', stroke: col, 'stroke-width': 1.5, 'shape-rendering': 'crispEdges' });
    } else if (k.t === 'w') {
      el('line', { x1: x - 5, x2: x + 5, y1: k.b, y2: k.b, stroke: col, 'stroke-width': 2 });
    } else {
      el('rect', { x: x - 5.5, y: k.b, width: 11, height: Math.max(k.c - k.b, 2), fill: col, 'shape-rendering': 'crispEdges' });
    }
  }
  candles.filter(function (k) { return k.t !== 'y'; }).forEach(drawCandle);

  function path(parts, fx, fy, attrs) {
    var pts = parts.map(function (p) { return fx(p[0]).toFixed(1) + ',' + fy(p[1]).toFixed(1); });
    attrs.points = pts.join(' ');
    attrs.fill = 'none';
    attrs['stroke-linejoin'] = 'round';
    el('polyline', attrs);
  }
  var X6 = function (v) { return v / 2.24; };
  var X7 = function (v) { return 700 + v / 1.568; };

  var red6 = [[15,350],[65,390],[110,435],[170,500],[240,590],[270,630],[380,760],[440,830],[500,900],[600,975],[680,1018],[740,1050],[800,1090],[860,1125],[940,1148],[1000,1155],[1080,1157],[1160,1178],[1200,1195],[1260,1213],[1310,1215],[1350,1205],[1410,1135],[1480,1050],[1568,955]];
  var red7 = [[0,605],[40,535],[85,495],[145,462],[210,457],[250,490],[300,540],[350,610],[420,735],[470,800],[520,850],[610,915],[680,950],[750,962],[800,962],[862,970],[930,950],[975,920],[1040,892],[1075,890],[1120,920],[1180,1000],[1240,1075],[1290,1150],[1345,1195],[1385,1212],[1402,1210]];
  var yel6 = [[15,455],[60,510],[110,570],[165,655],[240,750],[310,820],[345,870],[395,930],[450,970],[510,1003],[540,1010],[620,1058],[680,1075],[720,1105],[760,1155],[790,1173],[830,1165],[870,1175],[920,1145],[975,1128],[1020,1148],[1090,1215],[1145,1255],[1190,1245],[1250,1210],[1285,1195],[1320,1140],[1360,1060],[1410,960],[1480,900],[1520,875],[1568,825]];
  var yel7 = [[0,495],[30,440],[65,427],[90,440],[120,460],[170,465],[205,505],[240,590],[290,670],[340,765],[400,830],[440,860],[470,875],[510,910],[570,950],[610,962],[750,960],[800,970],[843,990],[862,965],[900,915],[925,875],[955,850],[980,850],[1020,885],[1060,945],[1100,1020],[1160,1105],[1210,1155],[1265,1222]];
  var yel7b = [[1345,1222],[1365,1195],[1402,1152]];
  var wht6 = [[15,108],[60,170],[125,258],[175,310],[235,372],[300,430],[400,505],[490,590],[545,625],[610,690],[680,752],[740,815],[810,880],[880,940],[950,982],[1030,1030],[1100,1062],[1170,1095],[1230,1122],[1280,1140],[1330,1147],[1410,1147],[1480,1130],[1568,1105]];
  var wht7 = [[0,748],[60,710],[100,685],[150,650],[220,620],[280,595],[330,585],[365,578],[400,580],[470,603],[530,640],[580,672],[640,730],[700,790],[760,840],[810,880],[860,903],[920,927],[1035,932],[1100,940],[1180,962],[1260,990],[1320,1020],[1370,1042],[1404,1048]];

  var sR = { stroke: '#c80000', 'stroke-width': 1.2 };
  var sY = { stroke: '#c8c800', 'stroke-width': 1.2 };
  var sW = { stroke: '#ffffff', 'stroke-width': 3.2 };
  function cp(o) { var r = {}; for (var k in o) r[k] = o[k]; return r; }
  path(red6, X6, A, cp(sR)); path(red7, X7, B, cp(sR));
  path(yel6, X6, A, cp(sY)); path(yel7, X7, B, cp(sY)); path(yel7b, X7, B, cp(sY));
  path(wht6, X6, A, cp(sW)); path(wht7, X7, B, cp(sW));

  candles.filter(function (k) { return k.t === 'y'; }).forEach(drawCandle);

  function arrow(x, y1, y2, col) {
    var up = y2 < y1, tip = y2, base = up ? y2 + 8 : y2 - 8;
    el('line', { x1: x, x2: x, y1: y1, y2: base, stroke: col, 'stroke-width': 2.5 });
    el('polygon', { points: (x - 6) + ',' + base + ' ' + (x + 6) + ',' + base + ' ' + x + ',' + tip, fill: col });
  }
  arrow(460, 419, 437, '#00b400');
  arrow(805, 286, 304, '#00b400');
  arrow(1360, 459, 478, '#00b400');
  arrow(424, 427, 410, '#f00000');
  arrow(559, 454, 437, '#f00000');
  arrow(1250, 506, 488, '#f00000');
  arrow(1568.5, 591, 571, '#f00000');

  // peak pointer
  el('path', { d: 'M614 191l-5 3 5 3M609 194h6l3 3 5-2 4 2', fill: 'none', stroke: '#a8a8a8', 'stroke-width': 1 });

  // volume
  var V = function (v) { return 760 + v / 3; };
  var vols = 'r1327 c1317 r1260 c1371 c1362 c1335 r1377 c1384 c1389 c1380 r1382 c1367 c1326 c1402 r1360 r1355 c1285 r1242 r1300 c1338 c1384 c1366 r1355 c1267 c1317 c1348 c1362 c1371 r1066 r638 c938 r1070 r783 r967 c1163 c1132 c1213 c1227 c1245 c1308 r1188 c1258 r868 r1040 c1209 c1025 r1233 r102 c457 r611 r787 c948 c1087 c1065 c1182 r1111 c1115 r738 c1035 c1142 r1265 c1245 r1296 r1102 c1115 r1255 c1240 c1304 c1178 c1371 ' +
    'r1367 c1371 c1358 r1390 r1336 r1255 r1228 c1335 r1404 r1400 c1420 c1362 r1426 c1420 c1438 c1415 r1440 c1443 r1345 r1354 r1354 c1331 c1407 r1421 c1411 c1411 c1411 r1327 c1366 c1348 r1277 r540 r908 r665 r1003 r998 c970 c1083 c1191 c1290 c1304 c1286 r1309 c1272 c1290 r1313 r1327 r1223 c1380 r1367 c1376 c1407 c1389 r1426 r1272 r548 c875 r737 r832 r900';
  vols.split(' ').forEach(function (s, i) {
    var t = V(+s.slice(1)), x = Math.round(barX(i)) + 0.5;
    if (s[0] === 'r') {
      el('rect', { x: x - 4.5, y: t, width: 9, height: 1274 - t, fill: '#000', stroke: '#e82828', 'stroke-width': 1.6, 'shape-rendering': 'crispEdges' });
    } else {
      el('rect', { x: x - 5.5, y: t, width: 11, height: 1275 - t, fill: CYAN, 'shape-rendering': 'crispEdges' });
    }
  });

  var XV1 = function (v) { return v / 1.823; };
  var XV2 = function (v) { return 860 + v / 1.823; };
  var w1 = [[12,1355],[32,1363],[55,1338],[95,1328],[140,1337],[170,1368],[210,1377],[260,1380],[280,1368],[350,1362],[410,1312],[460,1307],[505,1345],[550,1345],[575,1332],[620,1338],[640,1285],[665,1160],[700,1040],[730,900],[752,882],[780,985],[820,1055],[845,1150],[880,1225],[930,1248],[955,1170],[1000,1115],[1030,1077],[1045,1075],[1080,860],[1115,680],[1135,635],[1155,580],[1190,810],[1220,1000],[1250,1085],[1268,1112],[1295,1042],[1335,1030],[1375,1080],[1405,1200],[1425,1210],[1450,1205],[1515,1203],[1568,1275]];
  var w2 = [[0,1278],[50,1330],[85,1375],[110,1360],[150,1318],[175,1308],[220,1325],[280,1400],[350,1412],[380,1432],[405,1425],[450,1395],[505,1358],[550,1385],[597,1413],[630,1390],[680,1360],[712,1170],[735,1090],[757,940],[780,870],[801,823],[825,910],[845,945],[865,1045],[890,1105],[935,1235],[965,1285],[980,1295],[1035,1297],[1050,1305],[1070,1285],[1095,1313],[1150,1345],[1185,1390],[1205,1395],[1228,1370],[1250,1190],[1290,970],[1315,840],[1340,782]];
  var y1 = [[12,1305],[35,1332],[80,1345],[120,1345],[165,1357],[225,1353],[290,1372],[350,1373],[400,1345],[430,1337],[500,1337],[525,1325],[570,1323],[615,1340],[640,1310],[670,1220],[705,1175],[730,1115],[770,1080],[840,1020],[865,1042],[887,1105],[930,1150],[990,1170],[1045,1160],[1075,1000],[1110,900],[1155,828],[1180,850],[1245,860],[1268,845],[1300,935],[1355,1060],[1385,1105],[1425,1123],[1450,1115],[1490,1140],[1520,1205],[1568,1238]];
  var y2 = [[0,1242],[60,1265],[105,1318],[160,1320],[195,1345],[265,1350],[330,1365],[395,1418],[450,1405],[480,1393],[600,1390],[620,1378],[690,1372],[725,1250],[755,1170],[800,1090],[825,1030],[865,998],[912,993],[940,1080],[978,1170],[1015,1220],[1050,1270],[1100,1305],[1140,1315],[1200,1348],[1228,1350],[1250,1265],[1280,1210],[1338,1080]];
  var sVW = { stroke: '#d8d8d8', 'stroke-width': 1.2 };
  var sVY = { stroke: '#d8d800', 'stroke-width': 1.4 };
  path(w1, XV1, V, cp(sVW)); path(w2, XV2, V, cp(sVW));
  path(y1, XV1, V, cp(sVY)); path(y2, XV2, V, cp(sVY));

  // frame lines
  function hl(x1, x2, y, w) { el('line', { x1: x1, x2: x2, y1: y, y2: y, stroke: DARK, 'stroke-width': w }); }
  function vl(x, y1, y2, w) { el('line', { x1: x, x2: x, y1: y1, y2: y2, stroke: DARK, 'stroke-width': w }); }
  hl(0, 1715, 765, 2);
  hl(0, 1715, 1282, 2);
  vl(1639.5, 67, 1306, 2);
  hl(1640, 1713, 768, 2);
  vl(1713, 767, 1282, 2);
  [189, 423.5, 670, 916.5, 1175, 1457].forEach(function (x) { vl(x, 1282, 1306, 1.5); });
  [70, 306, 365, 485, 545, 608, 794, 858, 978, 1046, 1111, 1240, 1316, 1386, 1521, 1581].forEach(function (x) { vl(x, 1282, 1287, 1.2); });
})();
```
